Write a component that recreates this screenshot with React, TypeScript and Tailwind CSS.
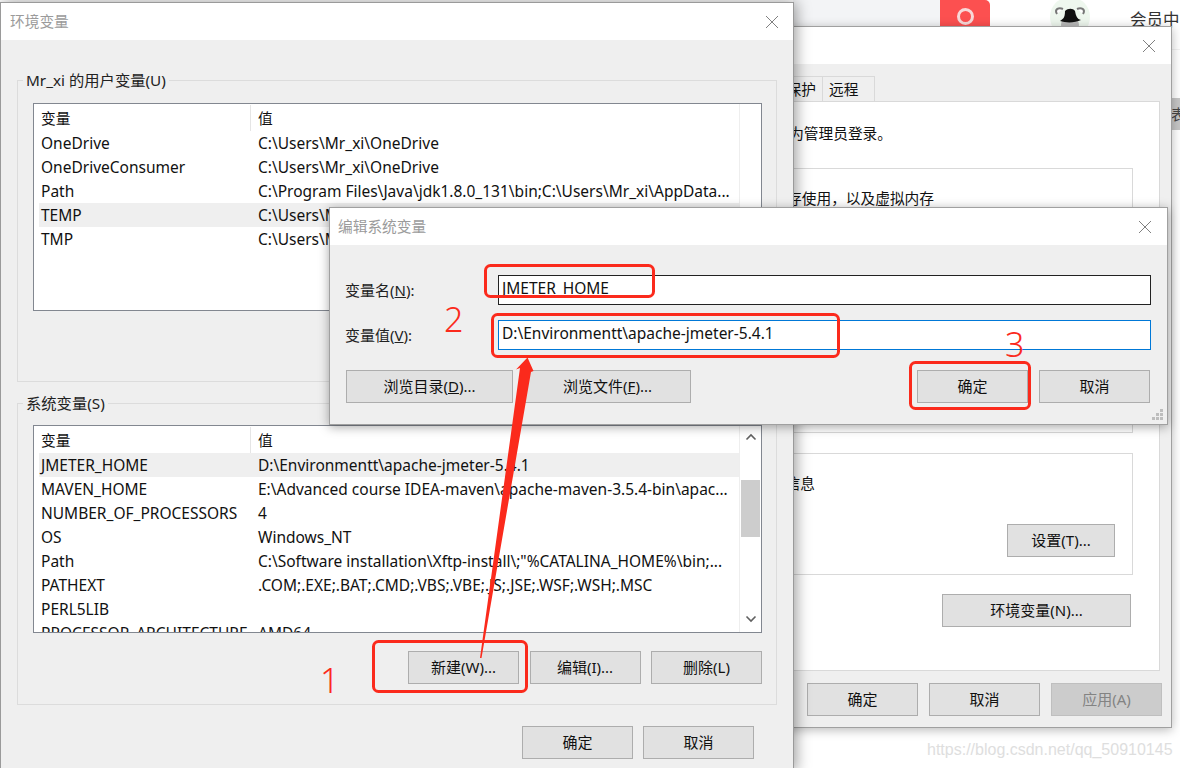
import type { ReactNode } from "react";

type EnvRow = { name: string; value: string };

const userVars: EnvRow[] = [
  { name: "OneDrive", value: "C:\\Users\\Mr_xi\\OneDrive" },
  { name: "OneDriveConsumer", value: "C:\\Users\\Mr_xi\\OneDrive" },
  { name: "Path", value: "C:\\Program Files\\Java\\jdk1.8.0_131\\bin;C:\\Users\\Mr_xi\\AppData..." },
  { name: "TEMP", value: "C:\\Users\\Mr_xi\\AppData\\Local\\Temp" },
  { name: "TMP", value: "C:\\Users\\Mr_xi\\AppData\\Local\\Temp" },
];

const systemVars: EnvRow[] = [
  { name: "JMETER_HOME", value: "D:\\Environmentt\\apache-jmeter-5.4.1" },
  { name: "MAVEN_HOME", value: "E:\\Advanced course IDEA-maven\\apache-maven-3.5.4-bin\\apac..." },
  { name: "NUMBER_OF_PROCESSORS", value: "4" },
  { name: "OS", value: "Windows_NT" },
  { name: "Path", value: 'C:\\Software installation\\Xftp-install\\;"%CATALINA_HOME%\\bin;...' },
  { name: "PATHEXT", value: ".COM;.EXE;.BAT;.CMD;.VBS;.VBE;.JS;.JSE;.WSF;.WSH;.MSC" },
  { name: "PERL5LIB", value: "" },
  { name: "PROCESSOR_ARCHITECTURE", value: "AMD64" },
];

function Btn({ children, w = "w-[111px]", disabled }: { children: ReactNode; w?: string; disabled?: boolean }) {
  return (
    <div
      className={`${w} h-[33px] shrink-0 flex items-center justify-center border whitespace-nowrap text-[15px] pb-[2px] ${
        disabled ? "bg-[#cccccc] border-[#bfbfbf] text-[#838383]" : "bg-[#e1e1e1] border-[#adadad] text-[#111]"
      }`}
    >
      {children}
    </div>
  );
}

function CloseIcon() {
  return (
    <svg width="14" height="14" viewBox="0 0 14 14" className="shrink-0">
      <path d="M1 1l12 12M13 1L1 13" stroke="#808080" strokeWidth="1" fill="none" />
    </svg>
  );
}

function TitleBar({ title, closeMr, pl = "pl-[9px]" }: { title?: string; closeMr: string; pl?: string }) {
  return (
    <div className={`h-[37px] shrink-0 bg-white flex items-center justify-between ${pl}`}>
      <span className="text-[#9b9b9b] pb-[2px]">{title}</span>
      <div className={closeMr}>
        <CloseIcon />
      </div>
    </div>
  );
}

function Chevron({ up }: { up?: boolean }) {
  return (
    <div className="h-[22px] flex items-center justify-center">
      <svg width="12" height="8" viewBox="0 0 12 8">
        <path d={up ? "M1.5 6.5L6 2l4.5 4.5" : "M1.5 1.5L6 6l4.5-4.5"} stroke="#606060" strokeWidth="1.6" fill="none" />
      </svg>
    </div>
  );
}

function VarTable({ rows, selected, scrollbar }: { rows: EnvRow[]; selected: string; scrollbar?: boolean }) {
  return (
    <div className="h-[208px] border border-[#828790] bg-white flex overflow-hidden">
      <div className="w-[705px] shrink-0 overflow-hidden">
        <div className="h-[27px] flex items-center pl-[5px]">
          <span className="w-[212px] pl-[2px] border-r border-[#e5e5e5] h-[26px] flex items-center">变量</span>
          <span className="pl-[7px]">值</span>
        </div>
        {rows.map((row) => (
          <div
            key={row.name}
            className={`h-[24px] ml-[5px] flex items-center whitespace-nowrap text-[15.5px] ${row.name === selected ? "bg-[#efefef]" : ""}`}
          >
            <span className="w-[212px] pl-[2px] shrink-0">{row.name}</span>
            <span className="pl-[7px]">{row.value}</span>
          </div>
        ))}
      </div>
      <div className="flex-1 border-l border-[#eeeeee] flex flex-col">
        {scrollbar ? (
          <>
            <Chevron up />
            <div className="h-[57px] mt-[32px] mx-[1px] bg-[#cdcdcd]" />
            <div className="mt-auto mb-[2px]">
              <Chevron />
            </div>
          </>
        ) : null}
      </div>
    </div>
  );
}

function VarGroup({
  label,
  rows,
  selected,
  scrollbar,
  mt,
  pt,
  mb,
}: {
  label: string;
  rows: EnvRow[];
  selected: string;
  scrollbar?: boolean;
  mt: string;
  pt: string;
  mb: string;
}) {
  return (
    <fieldset className={`${mt} ${pt} border border-[#dcdcdc] pl-[15px] pr-[14px]`}>
      <legend className="ml-[-10px] px-[3px] h-5 leading-5 text-[15.3px] text-[#222]">{label}</legend>
      <VarTable rows={rows} selected={selected} scrollbar={scrollbar} />
      <div className={`flex justify-end gap-[10.5px] mt-[18px] ${mb}`}>
        <Btn>新建(W)...</Btn>
        <Btn>编辑(I)...</Btn>
        <Btn>删除(L)</Btn>
      </div>
    </fieldset>
  );
}

function PageBehind() {
  return (
    <div className="flex h-[50px] pl-[793px] items-start border-b border-[#f2f2f2]">
      <div className="w-[147px] h-[26px] bg-[#f3f4f6]" />
      <div className="w-[50px] h-[27px] bg-[#fc5050] rounded-tr-[5px] flex items-center justify-center pt-[6px]">
        <div className="w-[17px] h-[17px] rounded-full border-[3px] border-[#f8d8d8]" />
      </div>
      <svg width="42" height="32" viewBox="0 0 42 32" className="ml-[59px] shrink-0">
        <circle cx="21" cy="17" r="20" fill="#eef7ee" />
        <circle cx="21" cy="25" r="9" fill="#b9b9b9" />
        <path d="M8 14c-3-5 2-7 6-5M34 14c3-5-2-7-6-5" stroke="#777" strokeWidth="2" fill="#fff" />
        <path d="M11 21c3-2 5-3 5-10 3-3 8-3 10 0 1 5 2 8 6 9-6 3-15 3-21 1z" fill="#111" />
      </svg>
      <span className="ml-[39px] mt-[9px] text-[16.5px] leading-[22px] text-[#333] whitespace-nowrap">会员中</span>
    </div>
  );
}

function SystemProps() {
  return (
    <div className="absolute left-[500px] top-[26px] w-[672px] h-[702px] border border-[#a0a0a0] bg-[#efefef] flex flex-col shadow-[0_2px_10px_rgba(0,0,0,0.28)]">
      <TitleBar closeMr="mr-[15px]" />
      <div className="pt-[12px] pr-[11px] pl-[10px] flex-1 flex flex-col">
        <div className="h-[25px] w-[364px] flex justify-end">
          <div className="h-[26px] px-[6px] border border-[#d9d9d9] flex items-center whitespace-nowrap">系统保护</div>
          <div className="h-[26px] w-[53px] ml-[-1px] pl-[6px] border border-[#d9d9d9] flex items-center">远程</div>
        </div>
        <div className="h-[570px] shrink-0 bg-white border border-[#d9d9d9] pr-[26px] relative">
          <div className="mt-[21px] h-[20px] leading-[20px] w-[380px] text-right whitespace-nowrap">
            要进行大多数更改，你必须作为管理员登录。
          </div>
          <div className="mt-[25px] h-[265px] border border-[#d9d9d9] pt-[19px]">
            <div className="w-[421px] h-[20px] leading-[20px] text-right whitespace-nowrap">
              视觉效果，处理器计划，内存使用，以及虚拟内存
            </div>
          </div>
          <div className="mt-[20px] h-[122px] border border-[#d9d9d9] pt-[19px] flex flex-col">
            <div className="w-[302px] h-[20px] leading-[20px] text-right whitespace-nowrap">系统启动、系统故障和调试信息</div>
            <div className="mt-auto mb-[17px] mr-[17px] flex justify-end">
              <Btn w="w-[108px]">设置(T)...</Btn>
            </div>
          </div>
          <div className="mt-[19px] mr-[2px] flex justify-end">
            <Btn w="w-[189px]">环境变量(N)...</Btn>
          </div>
        </div>
        <div className="mt-[12px] flex justify-end gap-[11px] mr-[-2px]">
          <Btn>确定</Btn>
          <Btn>取消</Btn>
          <Btn disabled>应用(A)</Btn>
        </div>
      </div>
    </div>
  );
}

function EnvWindow() {
  return (
    <div className="absolute left-0 top-[2px] w-[794px] h-[770px] border border-[#9a9a9a] bg-[#efefef] flex flex-col shadow-[2px_0_14px_rgba(0,0,0,0.4)]">
      <TitleBar title="环境变量" closeMr="mr-[14px]" />
      <div className="pt-[30px] px-[16px]">
        <VarGroup label="Mr_xi 的用户变量(U)" rows={userVars} selected="TEMP" mt="" pt="pt-[13px]" mb="mb-[19px]" />
        <VarGroup label="系统变量(S)" rows={systemVars} selected="JMETER_HOME" scrollbar mt="mt-[11px]" pt="pt-[12px]" mb="mb-[20px]" />
        <div className="flex justify-end gap-[10px] mt-[21px] mr-[23px]">
          <Btn>确定</Btn>
          <Btn>取消</Btn>
        </div>
      </div>
    </div>
  );
}

function EditDialog() {
  return (
    <div className="absolute left-[329px] top-[207px] w-[839px] h-[218px] border border-[#a0a0a0] bg-[#efefef] flex flex-col shadow-[0_2px_10px_rgba(0,0,0,0.35)]">
      <TitleBar title="编辑系统变量" closeMr="mr-[15px]" pl="pl-[8px]" />
      <div className="pt-[30px] pl-[15px] pr-[16px] flex flex-col relative flex-1">
        <div className="flex items-center h-[30px]">
          <span className="w-[153px] text-[15px] text-[#222]">
            变量名(<u>N</u>):
          </span>
          <div className="flex-1 h-[30px] border border-[#222] bg-white pl-[3px] leading-[24px] text-[15.5px]">JMETER_HOME</div>
        </div>
        <div className="flex items-center h-[30px] mt-[15px]">
          <span className="w-[153px] text-[15px] text-[#222]">
            变量值(<u>V</u>):
          </span>
          <div className="flex-1 h-[30px] border border-[#0078d7] bg-white pl-[3px] leading-[25px] text-[15.5px]">
            D:\Environmentt\apache-jmeter-5.4.1
          </div>
        </div>
        <div className="flex mt-[20px] ml-[1px] mr-[1px]">
          <Btn w="w-[167px]">
            浏览目录(<u>D</u>)...
          </Btn>
          <div className="ml-[11px]">
            <Btn w="w-[167px]">
              浏览文件(<u>F</u>)...
            </Btn>
          </div>
          <div className="ml-auto flex gap-[11px]">
            <Btn>确定</Btn>
            <Btn>取消</Btn>
          </div>
        </div>
        <svg width="11" height="11" viewBox="0 0 11 11" className="absolute right-[4px] bottom-[4px]">
          <path d="M8 0h3v3H8zM4 4h3v3H4zM8 4h3v3H8zM0 8h3v3H0zM4 8h3v3H4zM8 8h3v3H8z" fill="#bdbdbd" />
        </svg>
      </div>
    </div>
  );
}

// red marks drawn on top of the screenshot
function Annotations() {
  const red = "#fb2a1c";
  return (
    <>
      <svg width="1180" height="768" viewBox="0 0 1180 768" className="absolute left-0 top-0 pointer-events-none">
        <g fill="none" stroke={red} strokeWidth="3">
          <rect x="485.5" y="265.5" width="168" height="31" rx="5" />
          <rect x="492.5" y="314.5" width="346" height="42" rx="5" />
          <rect x="910.5" y="362.5" width="119" height="46" rx="5" />
          <rect x="373.5" y="641.5" width="153" height="50" rx="5" />
        </g>
        <path d="M480 658L481.5 658L531 372L533.5 371L527.5 357.5L516 369.5L520 368Z" fill={red} />
      </svg>
      <span className="absolute left-[320px] top-[658px] text-[34px] leading-[44px] font-light text-[#fb2a1c]">1</span>
      <span className="absolute left-[444px] top-[297px] text-[34px] leading-[44px] font-light text-[#fb2a1c]">2</span>
      <span className="absolute left-[1005px] top-[322px] text-[34px] leading-[44px] font-light text-[#fb2a1c]">3</span>
      <span className="absolute left-[927px] top-[740px] text-[16px] leading-[20px] text-[#dedede] font-['Liberation_Sans',sans-serif] whitespace-nowrap">
        https://blog.csdn.net/qq_50910145
      </span>
    </>
  );
}

export default function App() {
  return (
    <div className="relative w-[1180px] h-[768px] overflow-hidden bg-white text-[14.7px] leading-[20px] text-[#111] font-['Noto_Sans','Noto_Sans_CJK_SC',sans-serif]">
      <PageBehind />
      <div className="absolute left-[1171px] top-[98px] w-[9px] h-[32px] bg-[#c6c6c6] overflow-hidden leading-[32px] text-[#444]">表</div>
      <SystemProps />
      <EnvWindow />
      <EditDialog />
      <Annotations />
    </div>
  );
}
